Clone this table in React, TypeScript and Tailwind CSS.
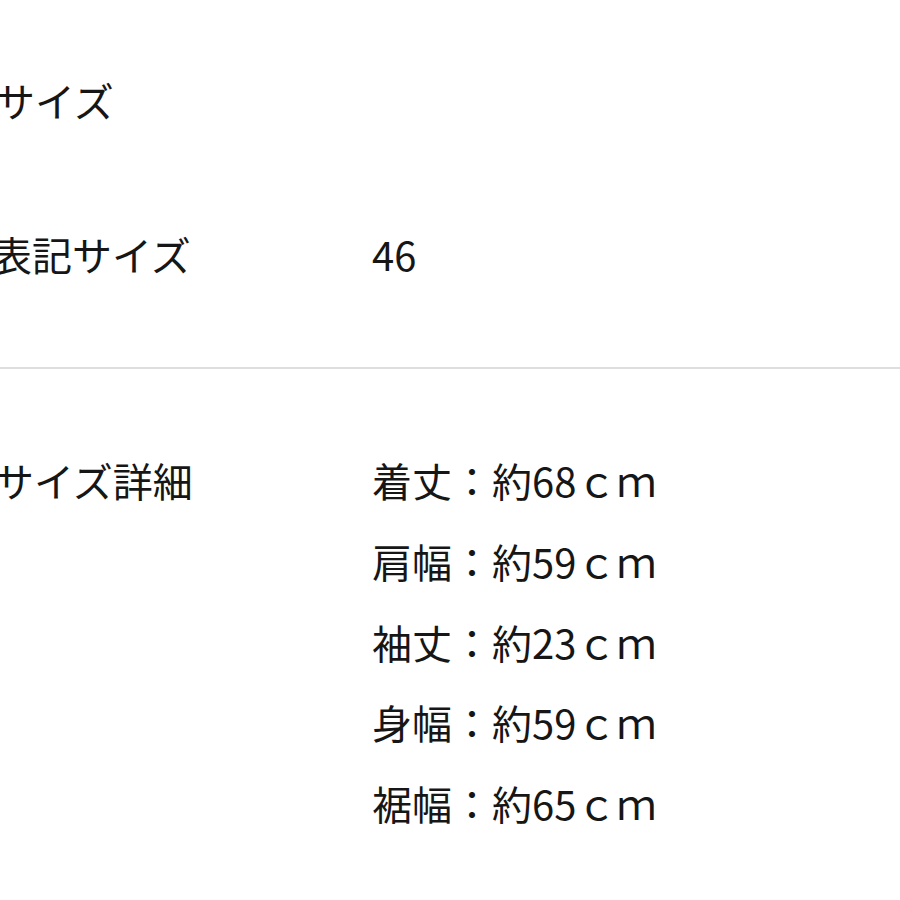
const sizes = [
  { part: '着丈', value: '68' },
  { part: '肩幅', value: '59' },
  { part: '袖丈', value: '23' },
  { part: '身幅', value: '59' },
  { part: '裾幅', value: '65' },
]

export default function App() {
  return (
    <main
      className="min-h-[900px] w-[900px] bg-white text-[#161616] overflow-hidden"
      style={{ fontFamily: '"Noto Sans CJK JP", "Noto Sans", sans-serif' }}
    >
      {/* Heading */}
      <h2 className="pt-[70px] -ml-[5px] text-[40px] leading-[60px] font-normal">サイズ</h2>

      {/* Tagged size */}
      <div className="mt-[94px] flex text-[40px] leading-[60px]">
        <div className="w-[372px] -ml-[8px] shrink-0">表記サイズ</div>
        <div className="ml-[8px]">46</div>
      </div>

      <div className="mt-[83px] h-[2px] w-full bg-[#dedede]" />

      {/* Size details */}
      <div className="pt-[71px] flex text-[40px] leading-[80.75px]">
        <div className="w-[372px] -ml-[6px] shrink-0">サイズ詳細</div>
        <ul className="ml-[6px]">
          {sizes.map((s, i) => (
            <li key={i}>
              {s.part}：約{s.value}ｃｍ
            </li>
          ))}
        </ul>
      </div>
    </main>
  )
}
